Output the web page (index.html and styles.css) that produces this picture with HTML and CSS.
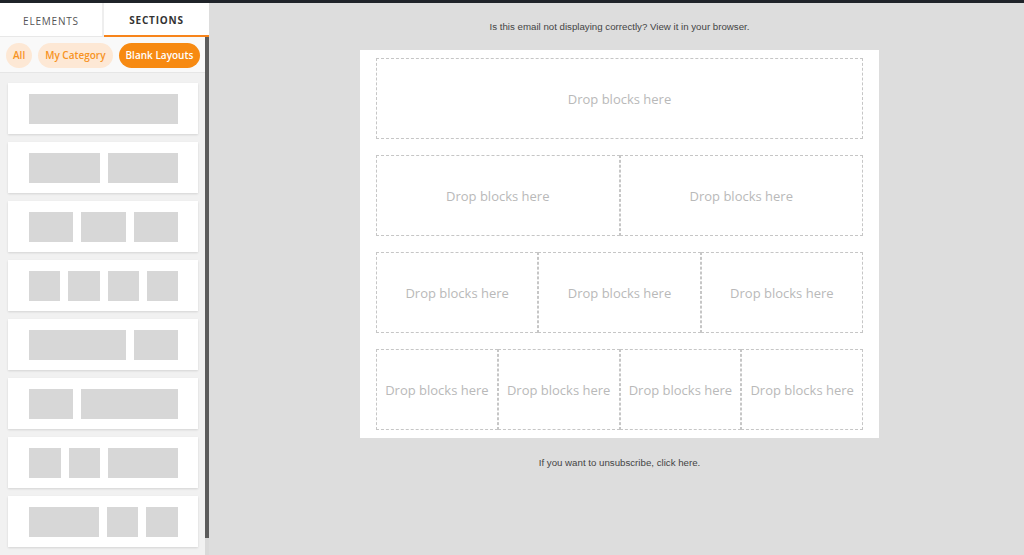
FILE: index.html
```html
<!DOCTYPE html>
<html lang="en">
<head>
<meta charset="UTF-8">
<meta name="viewport" content="width=device-width, initial-scale=1.0">
<title>Email Builder</title>
<link rel="stylesheet" href="styles.css">
</head>
<body>
<div class="topbar"></div>
<div class="app">
    <div class="sidebar">
        <div class="tabs">
            <div class="tab">ELEMENTS</div>
            <div class="tab active">SECTIONS</div>
        </div>
        <div class="panel">
            <div class="panel-body">
                <div class="pills">
                    <span class="pill">All</span>
                    <span class="pill">My Category</span>
                    <span class="pill active">Blank Layouts</span>
                </div>
                <div class="layouts">
                    <div class="layout"><i class="b1"></i></div>
                    <div class="layout"><i class="b1"></i><i class="b1"></i></div>
                    <div class="layout"><i class="b1"></i><i class="b1"></i><i class="b1"></i></div>
                    <div class="layout"><i class="b1"></i><i class="b1"></i><i class="b1"></i><i class="b1"></i></div>
                    <div class="layout"><i class="b2"></i><i class="b1"></i></div>
                    <div class="layout"><i class="b1"></i><i class="b2"></i></div>
                    <div class="layout"><i class="b1"></i><i class="b1"></i><i class="b2"></i></div>
                    <div class="layout"><i class="b2"></i><i class="b1"></i><i class="b1"></i></div>
                </div>
            </div>
            <div class="scrollbar"><div class="thumb"></div></div>
        </div>
    </div>

    <div class="main">
        <p class="note">Is this email not displaying correctly? View it in your browser.</p>
        <div class="email">
            <div class="row">
                <div class="cell">Drop blocks here</div>
            </div>
            <div class="row">
                <div class="cell">Drop blocks here</div>
                <div class="cell">Drop blocks here</div>
            </div>
            <div class="row">
                <div class="cell">Drop blocks here</div>
                <div class="cell">Drop blocks here</div>
                <div class="cell">Drop blocks here</div>
            </div>
            <div class="row">
                <div class="cell">Drop blocks here</div>
                <div class="cell">Drop blocks here</div>
                <div class="cell">Drop blocks here</div>
                <div class="cell">Drop blocks here</div>
            </div>
        </div>
        <p class="note bottom">If you want to unsubscribe, click here.</p>
    </div>
</div>
</body>
</html>
```
FILE: styles.css
```css
body {
    margin: 0;
    font-family: "Open Sans", sans-serif;
    background-color: #dddddd;
    height: 555px;
    overflow: hidden;
}

.topbar {
    height: 3px;
    background-color: #1f2329;
}

.app {
    display: flex;
    height: 552px;
}

/* sidebar */
.sidebar {
    width: 209px;
    display: flex;
    flex-direction: column;
    background-color: #f1f1f1;
}

.tabs {
    display: flex;
    height: 34px;
    background-color: #fff;
}

.tab {
    width: 104px;
    box-sizing: border-box;
    display: flex;
    align-items: center;
    justify-content: center;
    padding-top: 2px;
    font-size: 10px;
    letter-spacing: 0.8px;
    color: #555;
    border-bottom: 1px solid #e8e8e8;
    border-right: 2px solid #eeeeee;
}

.tab.active {
    width: 105px;
    color: #333;
    font-weight: 700;
    border-right: none;
    border-bottom: 2px solid #f7841b;
}

.panel {
    flex: 1;
    display: flex;
}

.panel-body {
    width: 205px;
}

.pills {
    height: 36px;
    box-sizing: border-box;
    display: flex;
    align-items: center;
    gap: 6px;
    padding: 1px 0 0 6px;
    background-color: #f9f9f9;
    border-bottom: 1px solid #e6e6e6;
}

.pill {
    height: 25px;
    line-height: 25px;
    padding: 0 7px;
    border-radius: 13px;
    font-size: 10px;
    font-weight: 600;
    white-space: nowrap;
    color: #f7931e;
    background-color: #fde8d5;
}

.pill.active {
    background-color: #f78a12;
    color: #fff;
}

.layouts {
    padding: 10px 0 0 8px;
    display: flex;
    flex-direction: column;
    gap: 8px;
}

.layout {
    width: 190px;
    height: 51px;
    box-sizing: border-box;
    padding: 11px 20px 10px 21px;
    background-color: #fff;
    box-shadow: 0 1px 2px rgba(0, 0, 0, 0.12);
    display: flex;
    gap: 8px;
}

.layout i {
    display: block;
    height: 30px;
    background-color: #d7d7d7;
}

.layout .b1 { flex: 1; }
.layout .b2 { flex: 2.2; }

.scrollbar {
    width: 4px;
    background-color: #d9d9d9;
}

.thumb {
    height: 501px;
    background-color: #5c5c5c;
}

/* email canvas */
.main {
    flex: 1;
    padding: 17px 0 0 6px;
    display: flex;
    flex-direction: column;
    align-items: center;
}

.note {
    margin: 0;
    font-family: "Liberation Sans", Arial, sans-serif;
    font-size: 9.7px;
    line-height: 14px;
    color: #444;
}

.note.bottom {
    margin-top: 18px;
}

.email {
    margin-top: 16px;
    width: 519px;
    box-sizing: border-box;
    padding: 8px 16px;
    background-color: #fff;
    display: flex;
    flex-direction: column;
    gap: 16px;
}

.row {
    display: flex;
    height: 81px;
}

.cell {
    flex: 1;
    display: flex;
    align-items: center;
    justify-content: center;
    border: 1px dashed #c6c6c6;
    font-size: 13px;
    color: #b9b9b9;
    white-space: nowrap;
}
```
